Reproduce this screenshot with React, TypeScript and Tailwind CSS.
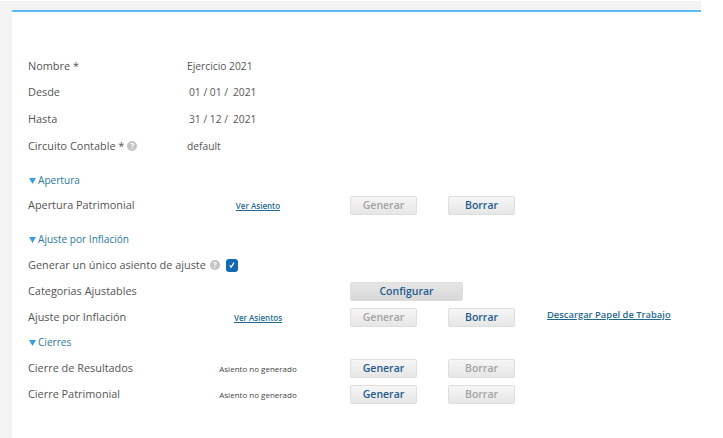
import { ReactNode } from 'react';

const font = { fontFamily: '"Open Sans", sans-serif' };

function Btn({ children, disabled, wide }: { children: ReactNode; disabled?: boolean; wide?: boolean }) {
  return (
    <button
      className={`h-[19px] rounded-[2px] border border-[#dedede] text-[10.5px] font-semibold leading-none ${
        wide
          ? 'w-[113px] bg-gradient-to-b from-[#e6e6e6] to-[#d8d8d8] text-[#1f5b8e]'
          : 'w-[67px] bg-gradient-to-b from-[#f6f6f6] to-[#e6e6e6]'
      } ${disabled ? 'text-[#a3a3a3]' : 'text-[#1f5b8e]'}`}
    >
      {children}
    </button>
  );
}

function Help() {
  return (
    <span className="inline-flex h-[10px] w-[10px] items-center justify-center rounded-full bg-[#c4c4c4] text-[8px] font-bold leading-none text-white">
      ?
    </span>
  );
}

function Section({ title, className }: { title: string; className: string }) {
  return (
    <div className={`flex h-[24px] items-center pt-[1px] text-[10.1px] text-[#2b7a9e] ${className}`}>
      <svg width="7" height="6" viewBox="0 0 7 6" className="ml-[1px] mr-[2px]">
        <path d="M0 0h7L3.5 6z" fill="#3a9ee4" />
      </svg>
      {title}
    </div>
  );
}

function Field({ label, value, className = '' }: { label: ReactNode; value: ReactNode; className?: string }) {
  return (
    <div className={`flex h-[26px] items-center ${className}`}>
      <div className="flex w-[159px] items-center gap-[3px]">{label}</div>
      <div className="flex pt-[1px] text-[10.25px]">{value}</div>
    </div>
  );
}

function DateValue({ d, m }: { d: string; m: string }) {
  return (
    <span className="flex gap-[5px] pl-[2px]">
      <span>
        {d} / {m} /
      </span>
      <span>2021</span>
    </span>
  );
}

function ActionRow({
  label,
  note,
  link,
  genOff,
  delOff,
  extra,
}: {
  label: string;
  note?: string;
  link?: string;
  genOff?: boolean;
  delOff?: boolean;
  extra?: ReactNode;
}) {
  return (
    <div className="flex h-[26px] items-center">
      <div className="w-[159px]">{label}</div>
      <div className="w-[163px] pr-[21px] text-center">
        {link && <span className="text-[8px] font-semibold text-[#1f6a8e] underline">{link}</span>}
        {note && <span className="text-[8px] text-[#444]">{note}</span>}
      </div>
      <Btn disabled={genOff}>Generar</Btn>
      <div className="ml-[31px]">
        <Btn disabled={delOff}>Borrar</Btn>
      </div>
      {extra}
    </div>
  );
}

export default function App() {
  return (
    <div className="h-[438px] w-[723px] overflow-hidden bg-white pt-[1px] pr-[22px]" style={font}>
      <div className="h-full bg-[#f3f3f3] pt-[9px] pl-[12px]">
        <div className="h-full border-t-2 border-[#5bbcf5] bg-white pt-[41px] pl-[16px] text-[10.9px] text-[#555]">
          <Field label="Nombre *" value="Ejercicio 2021" />
          <Field label="Desde" value={<DateValue d="01" m="01" />} />
          <Field label="Hasta" value={<DateValue d="31" m="12" />} className="mt-[1px]" />
          <Field
            label={
              <>
                Circuito Contable * <Help />
              </>
            }
            value="default"
            className="mt-[1px]"
          />

          <Section title="Apertura" className="mt-[9px]" />
          <ActionRow label="Apertura Patrimonial" link="Ver Asiento" genOff />

          <Section title="Ajuste por Inflación" className="mt-[9px]" />
          <div className="mt-[1px] flex h-[26px] items-center">
            Generar un único asiento de ajuste
            <span className="ml-[4px] flex">
              <Help />
            </span>
            <span className="ml-[6px] flex h-[13px] w-[12px] items-center justify-center rounded-[3px] bg-[#1268b3]">
              <svg width="8" height="8" viewBox="0 0 8 8" fill="none">
                <path d="M1.8 4.4 3.2 6.2 6 1.6" stroke="#fff" strokeWidth="1.3" />
              </svg>
            </span>
          </div>
          <div className="flex h-[26px] items-center">
            <div className="w-[322px]">Categorias Ajustables</div>
            <Btn wide>Configurar</Btn>
          </div>
          <ActionRow
            label="Ajuste por Inflación"
            link="Ver Asientos"
            genOff
            extra={
              <span className="mb-[4px] ml-[32px] text-[9.4px] font-semibold text-[#1f6a8e] underline">
                Descargar Papel de Trabajo
              </span>
            }
          />

          <Section title="Cierres" className="" />
          <div className="mt-[1px]">
            <ActionRow label="Cierre de Resultados" note="Asiento no generado" delOff />
            <ActionRow label="Cierre Patrimonial" note="Asiento no generado" delOff />
          </div>
        </div>
      </div>
    </div>
  );
}
